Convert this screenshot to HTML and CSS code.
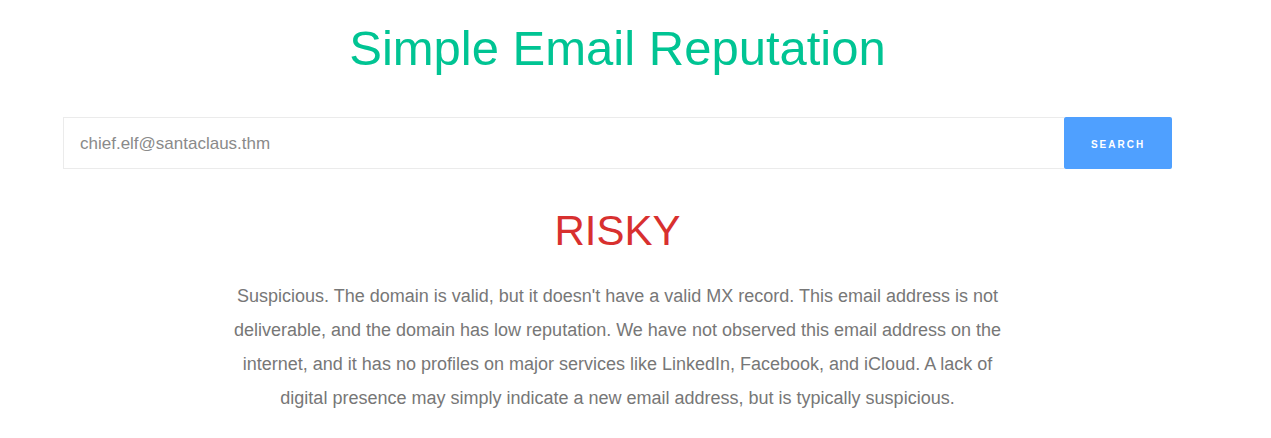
FILE: index.html
```html
<!DOCTYPE html>
<html>
<head>
<meta charset="utf-8">
<link rel="stylesheet" href="styles.css">
</head>
<body>
<main class="wrap">
  <h1 class="title">Simple Email Reputation</h1>
  <form class="search">
    <input class="search-input" type="text" value="chief.elf@santaclaus.thm">
    <button class="search-btn" type="button">SEARCH</button>
  </form>
  <h2 class="verdict">RISKY</h2>
  <p class="summary">Suspicious. The domain is valid, but it doesn't have a valid MX record. This email address is not deliverable, and the domain has low reputation. We have not observed this email address on the internet, and it has no profiles on major services like LinkedIn, Facebook, and iCloud. A lack of digital presence may simply indicate a new email address, but is typically suspicious.</p>
</main>
</body>
</html>
```
FILE: styles.css
```css
html, body {
  margin: 0;
  padding: 0;
  background: #fff;
  font-family: "Liberation Sans", Arial, sans-serif;
}
.wrap {
  width: 1109px;
  margin-left: 63px;
  display: flex;
  flex-direction: column;
  align-items: center;
}
.title {
  margin: 20px 0 0;
  font-size: 49px;
  font-weight: normal;
  line-height: 56px;
  color: #00c493;
}
.search {
  margin-top: 41px;
  display: flex;
  width: 100%;
  height: 52px;
}
.search-input {
  flex: 1;
  border: 1px solid #ebebeb;
  border-right: none;
  padding: 2px 16px 0;
  font-family: "Liberation Sans", Arial, sans-serif;
  font-size: 17px;
  color: #8a8a8a;
  outline: none;
}
.search-btn {
  width: 108px;
  border: none;
  border-radius: 2px;
  background: #4fa0ff;
  color: #fff;
  font-family: "Liberation Sans", Arial, sans-serif;
  font-weight: bold;
  font-size: 10px;
  letter-spacing: 2px;
  padding-top: 4px;
}
.verdict {
  margin: 38px 0 0;
  font-size: 42px;
  font-weight: normal;
  line-height: 48px;
  color: #d8302f;
}
.summary {
  margin: 24px 0 0;
  width: 790px;
  text-align: center;
  font-size: 18px;
  line-height: 34px;
  color: #777;
}
```
